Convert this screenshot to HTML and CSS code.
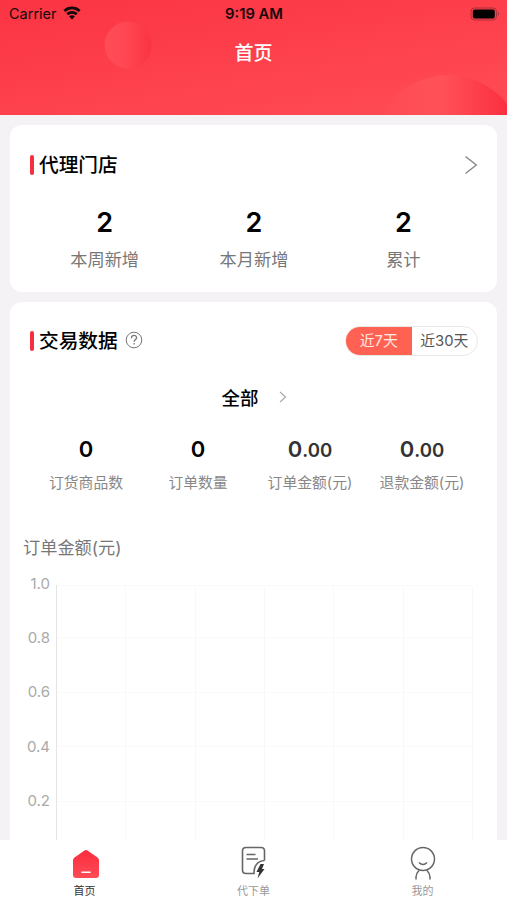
FILE: index.html
```html
<!DOCTYPE html>
<html lang="zh-CN">
<head>
<meta charset="UTF-8">
<meta name="viewport" content="width=device-width, initial-scale=1">
<title>首页</title>
<link rel="stylesheet" href="styles.css">
</head>
<body>
<div class="app">
	<header class="header">
		<svg class="header-bg" viewBox="0 0 507 115">
			<defs>
				<linearGradient id="ball" x1="0" y1="0" x2="1" y2="0">
					<stop offset="0" stop-color="#ff4d57"/>
					<stop offset="0.4" stop-color="#ff4853"/>
					<stop offset="1" stop-color="#fb3343"/>
				</linearGradient>
				<linearGradient id="hill" x1="0" y1="0" x2="1" y2="0">
					<stop offset="0" stop-color="#ff4952"/>
					<stop offset="0.45" stop-color="#ff5159"/>
					<stop offset="0.9" stop-color="#fb2f40"/>
				</linearGradient>
			</defs>
			<circle cx="128" cy="45" r="23.5" fill="url(#ball)"/>
			<circle cx="448" cy="150" r="75" fill="url(#hill)"/>
		</svg>
		<div class="status">
			<div class="carrier">
				<span>Carrier</span>
				<svg width="18" height="14" viewBox="0 0 20 15">
					<g fill="none" stroke="#16090b" stroke-width="3">
						<path d="M1.5 5.3a12.2 12.2 0 0 1 17 0"/>
						<path d="M4.7 8.9a7.5 7.5 0 0 1 10.6 0"/>
					</g>
					<path d="M6.8 11.3a4.5 4.5 0 0 1 6.4 0L10 14.6z" fill="#16090b"/>
				</svg>
			</div>
			<div class="time">9:19 AM</div>
			<div class="battery">
				<svg width="31" height="14" viewBox="0 0 31 14">
					<rect x="1" y="1" width="25.5" height="12" rx="3.5" fill="none" stroke="#a72e38"/>
					<rect x="2.8" y="2.6" width="22" height="8.8" rx="2" fill="#000"/>
					<path d="M28 4.8q2 2.2 0 4.4z" fill="#a72e38"/>
				</svg>
			</div>
		</div>
		<h1 class="page-title">首页</h1>
	</header>

	<main class="content">
		<section class="card shop">
			<div class="card-head">
				<h2>代理门店</h2>
				<svg class="more" width="14" height="20" viewBox="0 0 14 20"><path d="M1.5 1.5L12.3 10 1.5 18.5" fill="none" stroke="#888" stroke-width="1.4"/></svg>
			</div>
			<div class="shop-list">
				<div><b>2</b><span>本周新增</span></div>
				<div><b>2</b><span>本月新增</span></div>
				<div><b>2</b><span>累计</span></div>
			</div>
		</section>

		<section class="card trade">
			<div class="card-head">
				<h2>交易数据</h2>
				<svg class="help" width="18" height="18" viewBox="0 0 18 18" fill="none" stroke="#777">
					<circle cx="9" cy="9" r="7.8"/>
					<path d="M6.4 7.2c0-3.6 5.2-3.5 5.2-.5 0 1.8-2.5 1.9-2.5 4.1" stroke-width="1.3"/>
					<path d="M9.1 12.1v1.5" stroke-width="1.3"/>
				</svg>
				<div class="tabs">
					<span class="on">近7天</span>
					<span>近30天</span>
				</div>
			</div>
			<div class="filter">
				<span>全部</span>
				<svg width="8" height="12" viewBox="0 0 8 12"><path d="M1 1l5.6 5L1 11" fill="none" stroke="#aaa" stroke-width="1.2"/></svg>
			</div>
			<div class="trade-list">
				<div><b>0</b><span>订货商品数</span></div>
				<div><b>0</b><span>订单数量</span></div>
				<div class="money"><b>0<small>.00</small></b><span>订单金额(元)</span></div>
				<div class="money"><b>0<small>.00</small></b><span>退款金额(元)</span></div>
			</div>
			<h3 class="chart-title">订单金额(元)</h3>
			<div class="chart">
				<div class="y-axis">
					<span>1.0</span>
					<span>0.8</span>
					<span>0.6</span>
					<span>0.4</span>
					<span>0.2</span>
				</div>
				<svg class="grid" width="420" height="256" viewBox="0 0 420 256" fill="none">
					<path d="M1 .5H416M1 52.500H416M1 107.500H416M1 161.500H416M1 216.500H416" stroke="#fafafa"/>
					<path d="M69.500 1V256M139.500 1V256M208.500 1V256M277.500 1V256M347.500 1V256M416.500 1V256" stroke="#f8f8f8"/>
					<path d="M.5 0V256" stroke="#e4e4e4"/>
				</svg>
			</div>
		</section>
	</main>

	<nav class="tabbar">
		<a class="active">
			<svg width="34" height="36" viewBox="0 0 34 36">
				<defs>
					<linearGradient id="home" x1="0" y1="0" x2="0" y2="1">
						<stop offset="0" stop-color="#f92d3e"/>
						<stop offset="1" stop-color="#ff4b56"/>
					</linearGradient>
				</defs>
				<path d="M16.500 4.500q1.500-1 3 0L29.500 11.500q1.500 1 1.500 2.800V29q0 3-3 3H8q-3 0-3-3V14.300q0-1.800 1.500-2.800z" fill="url(#home)"/>
				<path d="M14 26.300h8" stroke="#fff" stroke-width="1.600" stroke-linecap="round"/>
			</svg>
			<span>首页</span>
		</a>
		<a>
			<svg width="34" height="36" viewBox="0 0 34 36" fill="none" stroke="#666" stroke-width="1.600">
				<path d="M27.500 14.500V5q0-3.500-3.500-3.500H9Q5.500 1.500 5.500 5V24q0 3.500 3.500 3.500H17C17 20 20 15 27.500 14.500"/>
				<path d="M9.500 8.500H18.500M9.500 13H21"/>
				<path d="M23.500 18h3.500l-2 5h2.500L20.500 32.500l1.800-6.500h-2.800z" fill="#333" stroke="none"/>
			</svg>
			<span>代下单</span>
		</a>
		<a>
			<svg width="34" height="36" viewBox="0 0 34 36" fill="none" stroke="#666" stroke-width="1.500">
				<circle cx="17" cy="13" r="11.500"/>
				<path d="M13 16.500q4 4 8 0M10 33.500V31q0-3.500 3-6.500M24 33.500V31q0-3.500-3-6.500"/>
			</svg>
			<span>我的</span>
		</a>
	</nav>
</div>
</body>
</html>
```
FILE: styles.css
```css
*{box-sizing:border-box}
body{margin:0; background:#f4f2f4; font-family:Inter,"Noto Sans CJK SC",sans-serif; color:#000}
h1,h2,h3{margin:0}
svg{display:block; flex:none}
.app{display:flex; flex-direction:column; height:900px; overflow:hidden}

/* header */
.header{position:relative; flex:none; height:115px; background:linear-gradient(170deg,#fb3443 0%,#ff4952 85%); overflow:hidden}
.header-bg{position:absolute; left:0; top:0; width:100%; height:100%}
.status{position:relative; display:grid; grid-template-columns:1fr auto 1fr; align-items:center; height:28px; padding:0 6px 0 9px; font-size:14px; line-height:28px; color:#16090b}
.carrier{display:flex; align-items:center; gap:6px; font-size:14.5px}
.carrier svg{margin-top:-3px}
.time{font-weight:600; font-size:14.8px; padding-right:2px}
.battery{display:flex; justify-content:flex-end; margin-top:-1px}
.page-title{position:relative; text-align:center; font-size:19px; line-height:28px; margin-top:12px; font-weight:500; color:#fff}

/* cards */
.content{flex:1; min-height:0; overflow:hidden; padding:10px 10px 0}
.card{background:#fff; border-radius:12px}
.card-head{display:flex; align-items:center; height:32px}
.card-head h2{display:flex; align-items:center; gap:5px; font-size:19.7px; line-height:32px; font-weight:500}
.card-head h2::before{content:""; width:4px; height:20px; border-radius:2px; background:#f52e40}
.more{margin-left:auto}
.help{margin:-2px 0 0 7px}

.shop{height:167px; padding:24px 19px 0 20px; margin-bottom:10px}
.shop-list{display:grid; grid-template-columns:repeat(3,1fr); margin:24px 0 0; text-align:center}
.shop-list b{display:block; font-size:27px; line-height:36px; font-weight:600}
.shop-list span{display:block; font-size:17.2px; line-height:26px; margin-top:6px; color:#777}

.trade{height:600px; padding:23px 19px 0 20px}
.tabs{display:flex; margin-left:auto; width:133px; height:30px; border:1px solid #e8e8e8; border-radius:15px; overflow:hidden; font-size:14.8px; line-height:28px; text-align:center; color:#555}
.tabs span{flex:1}
.tabs .on{background:#ff6252; color:#ffe9e5}
.filter{display:flex; justify-content:center; align-items:center; gap:20px; height:28px; margin-top:26px; font-size:18.5px; font-weight:500}
.trade-list{display:grid; grid-template-columns:repeat(4,1fr); margin:22px 0 0; text-align:center}
.trade-list b{display:block; height:32px; font-size:22px; line-height:32px; font-weight:600}
.trade-list small{font-size:18.6px}
.trade-list span{display:block; font-size:14.8px; line-height:22px; margin-top:7px; color:#888; white-space:nowrap}
.trade-list .money b{color:#333}

/* chart */
.chart-title{margin:41px 0 0 -7px; font-size:17.2px; line-height:26px; font-weight:400; color:#777}
.chart{display:flex; margin:12px 0 0 -10px}
.y-axis{width:36px; padding-right:6px; text-align:right; font-size:15px; color:#aaa}
.y-axis span{display:block; height:54.2px; line-height:22px}
.grid{margin-top:12px}

/* bottom bar */
.tabbar{flex:none; display:grid; grid-template-columns:repeat(3,1fr); height:60px; background:#fff}
.tabbar a{display:flex; flex-direction:column; align-items:center; padding-top:6px; font-size:11px; line-height:16px; color:#999}
.tabbar span{margin-top:1px}
.tabbar .active{color:#333}
```
